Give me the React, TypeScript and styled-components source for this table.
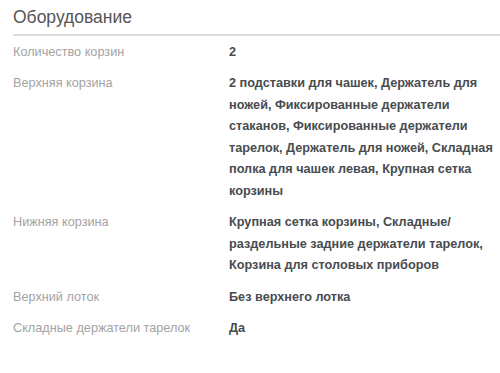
import React from "react"
import styled, { createGlobalStyle } from "styled-components"

interface SpecRow {
	label: string
	value: string
}

const rows: SpecRow[] = [
	{ label: "Количество корзин", value: "2" },
	{
		label: "Верхняя корзина",
		value:
			"2 подставки для чашек, Держатель для ножей, Фиксированные держатели стаканов, Фиксированные держатели тарелок, Держатель для ножей, Складная полка для чашек левая, Крупная сетка корзины",
	},
	{
		label: "Нижняя корзина",
		value: "Крупная сетка корзины, Складные/ раздельные задние держатели тарелок, Корзина для столовых приборов",
	},
	{ label: "Верхний лоток", value: "Без верхнего лотка" },
	{ label: "Складные держатели тарелок", value: "Да" },
]

const GlobalStyle = createGlobalStyle`
	body {
		margin: 0;
		background: #fff;
		font-family: "Liberation Sans", Arial, sans-serif;
	}
`

const Section = styled.section`
	padding: 6px 0 0 13px;
`

const Title = styled.h2`
	margin: 0;
	padding-bottom: 6px;
	font-size: 17.5px;
	font-weight: 400;
	line-height: 22px;
	color: #555;
	border-bottom: 2px solid #dcdcdc;
`

const SpecList = styled.dl`
	margin: 0;
	padding-top: 1px;
`

const Row = styled.div`
	display: grid;
	grid-template-columns: 216px 264px;
	padding: 4.8px 0;
`

const Label = styled.dt`
	margin: 0;
	font-size: 12.7px;
	line-height: 21.6px;
	color: #a3a3a3;
`

const Value = styled.dd`
	margin: 0;
	font-size: 12.7px;
	font-weight: 700;
	line-height: 21.6px;
	color: #484c50;
`

export default function App() {
	return (
		<>
			<GlobalStyle />
			<Section>
				<Title>Оборудование</Title>
				<SpecList>
					{rows.map((row) => (
						<Row key={row.label}>
							<Label>{row.label}</Label>
							<Value>{row.value}</Value>
						</Row>
					))}
				</SpecList>
			</Section>
		</>
	)
}
